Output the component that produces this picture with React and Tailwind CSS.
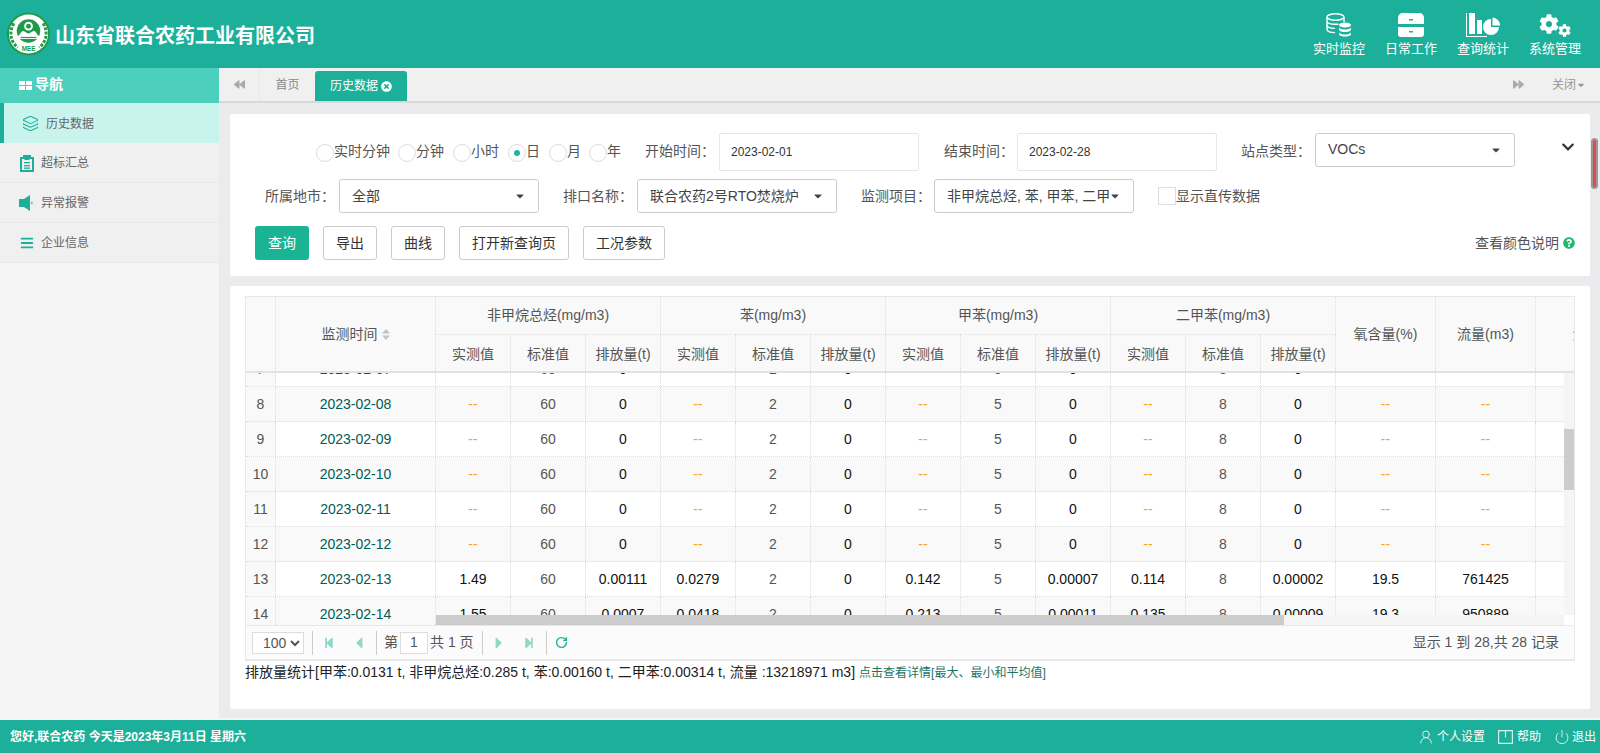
import { Layers, Power, RotateCw, UserRound } from 'lucide-react';
import {
  FaBackward,
  FaBars,
  FaCaretDown,
  FaCaretLeft,
  FaCaretRight,
  FaChevronDown,
  FaCog,
  FaForward,
  FaQuestionCircle,
  FaStepBackward,
  FaStepForward,
  FaTimesCircle,
} from 'react-icons/fa';

const TEAL = '#1cb09a';

const DB_ICON = (
  <svg width="26" height="24" viewBox="0 0 26 24" fill="none" stroke="white" strokeWidth="1.4">
    <ellipse cx="9.5" cy="4" rx="8.5" ry="3.2" />
    <path d="M1 4v12c0 2 3 3.6 8 3.6M18 4v5M1 8c0 2 3.5 3.3 8.5 3.3 1 0 2-.1 3-.2M1 12c0 2 3 3.4 8 3.4" />
    <ellipse cx="19" cy="12" rx="6" ry="2.4" fill="white" stroke="none" />
    <path d="M13 14.5c1 1.5 3 2 6 2s5-.5 6-2v2.5c-1 1.500-3 2-6 2s-5-.5-6-2zM13 19.500c1 1.500 3 2 6 2s5-.5 6-2v2c-1 1.500-3 2-6 2s-5-.5-6-2z" fill="white" stroke="none" />
  </svg>
);

const DRAWER_ICON = (
  <svg width="26" height="24" viewBox="0 0 26 24" fill="white">
    <path d="M5 0h16c3 0 5 2 5 5v6H0V5c0-3 2-5 5-5z" />
    <path d="M0 14h26v7c0 2-1 3-3 3H3c-2 0-3-1-3-3z" />
    <rect x="11" y="6" width="4" height="1.500" fill={TEAL} />
    <rect x="11" y="18" width="4" height="1.500" fill={TEAL} />
  </svg>
);

const CHART_ICON = (
  <svg width="34" height="24" viewBox="0 0 34 24" fill="white">
    <path d="M0 0h1v23h20v1H0z" />
    <rect x="3" y="0" width="6" height="21" />
    <rect x="11" y="7" width="5" height="14" />
    <path d="M25 6v8h8a8 8 0 1 1-8-8z" />
    <path d="M26.500 4.500a8 8 0 0 1 7.500 8h-7.500z" />
  </svg>
);

const GEARS_ICON = (
  <div className="flex items-end h-[24px]">
    <FaCog size={20} color="white" className="mb-[3px]" />
    <FaCog size={13} color="white" className="-ml-[1px]" />
  </div>
);

const TOP_NAV = [
  { label: '实时监控', icon: DB_ICON },
  { label: '日常工作', icon: DRAWER_ICON },
  { label: '查询统计', icon: CHART_ICON },
  { label: '系统管理', icon: GEARS_ICON },
];

const CELL = 'flex items-center justify-center border-r border-dotted border-[#ddd]';
const SUB_COL = `${CELL} w-[75px] shrink-0`;
const WIDE_COL = `${CELL} w-[100px] shrink-0`;

const ROWS = [
  ...[7, 8, 9, 10, 11, 12].map((n) => ({
    n,
    values: ['--', '60', '0', '--', '2', '0', '--', '5', '0', '--', '8', '0', '--', '--'],
  })),
  { n: 13, values: ['1.49', '60', '0.00111', '0.0279', '2', '0', '0.142', '5', '0.00007', '0.114', '8', '0.00002', '19.5', '761425'] },
  { n: 14, values: ['1.55', '60', '0.0007', '0.0418', '2', '0', '0.213', '5', '0.00011', '0.135', '8', '0.00009', '19.3', '950889'] },
];
const GROUPS = ['非甲烷总烃(mg/m3)', '苯(mg/m3)', '甲苯(mg/m3)', '二甲苯(mg/m3)'];
const pad = (n) => String(n).padStart(2, '0');

function Logo() {
  return (
    <svg width="43" height="44" viewBox="0 0 44 44" className="shrink-0">
      <circle cx="22" cy="22" r="22" fill="#1f9a48" />
      <circle cx="22" cy="22" r="20" fill="#fff" />
      <path d="M7 11c-5 9-4 18 4 25M37 11c5 9 4 18-4 25" fill="none" stroke="#1f9a48" strokeWidth="3" strokeDasharray="3 1.500" />
      <circle cx="22" cy="19" r="12" fill="#1f9a48" />
      <circle cx="22" cy="14" r="4.500" fill="#fff" />
      <circle cx="22" cy="14" r="2.500" fill="#1f9a48" />
      <path d="M11 24c3-1 3-5 5.500-5s3 2.500 5.500 2.500 3-2.500 5.500-2.500 2.500 4 5.500 5v3H11z" fill="#fff" />
      <path d="M14 25h16v1.200H14z" fill="#1f9a48" />
      <text x="22" y="39" textAnchor="middle" fontSize="6.500" fontWeight="700" fill="#1f9a48" fontFamily="Liberation Sans">MEE</text>
    </svg>
  );
}

function TopBar() {
  return (
    <header className="h-[68px] shrink-0 flex items-center bg-[#1cb09a] pl-[7px] pr-[9px]">
      <Logo />
      <h1 className="ml-[5px] mt-[3px] text-[20px] font-bold text-white">山东省联合农药工业有限公司</h1>
      <nav className="ml-auto flex">
        {TOP_NAV.map((item) => (
          <div key={item.label} className="w-[72px] h-[68px] flex flex-col items-center pt-[13px]">
            <div className="h-[24px] flex items-center justify-center">{item.icon}</div>
            <span className="mt-[2px] text-[13px] leading-[20px] text-white">{item.label}</span>
          </div>
        ))}
      </nav>
    </header>
  );
}

function ClipIcon() {
  return (
    <svg width="14" height="17" viewBox="0 0 14 17" fill="#1cb09a">
      <path d="M0 2h3V0h8v2h3v15H0zM2 4v11h10V4H9.500v1h-5V4z" fillRule="evenodd" />
      <rect x="4" y="7" width="6" height="1.300" />
      <rect x="4" y="10" width="6" height="1.300" />
      <rect x="4" y="12.500" width="6" height="1.300" />
    </svg>
  );
}

function SpeakerIcon() {
  return (
    <svg width="15" height="16" viewBox="0 0 15 16" fill="#1cb09a">
      <path d="M0 4h5l6-4v16l-6-4H0z" />
      <path d="M13 6.500c.8.800.8 2.200 0 3l-.8-.6c.4-.5.4-1.300 0-1.800z" />
    </svg>
  );
}

function Sidebar() {
  const items = [
    { label: '超标汇总', icon: <ClipIcon /> },
    { label: '异常报警', icon: <SpeakerIcon /> },
    { label: '企业信息', icon: <FaBars size={14} color="#1cb09a" /> },
  ];
  return (
    <aside className="w-[219px] shrink-0 bg-[#f5f5f5]">
      <div className="h-[35px] flex items-center pl-[19px] bg-[#4ccfbc] text-white text-[14px] font-bold">
        <svg width="13" height="9" viewBox="0 0 13 9" fill="white" className="mr-[3px]">
          <rect width="6" height="4" />
          <rect x="7" width="6" height="4" />
          <rect y="5" width="6" height="4" />
          <rect x="7" y="5" width="6" height="4" />
        </svg>
        <span className="-mt-[2px]">导航</span>
      </div>
      <div className="h-[40px] flex items-center border-l-4 border-[#1cb09a] bg-[#c9f4ed] pl-[18px] pt-px text-[12px] text-[#666]">
        <Layers size={17} color="#1cb09a" strokeWidth={1.5} />
        <span className="ml-[7px]">历史数据</span>
      </div>
      {items.map((item) => (
        <div key={item.label} className="h-[40px] flex items-center bg-[#f0f0f0] border-b border-[#e8e8e8] pl-[19px] pt-px text-[12px] text-[#666]">
          <div className="w-[15px] flex justify-center">{item.icon}</div>
          <span className="ml-[7px]">{item.label}</span>
        </div>
      ))}
    </aside>
  );
}

function TabBar() {
  return (
    <div className="h-[35px] shrink-0 flex bg-[#f0f0f0] border-b-2 border-[#d9d9d9] text-[12px]">
      <div className="w-[41px] flex items-center justify-center border-r border-[#e8e8e8]">
        <FaBackward size={11} color="#aaa" />
      </div>
      <div className="w-[55px] flex items-center justify-center text-[#888]">首页</div>
      <div className="mt-[3px] w-[92px] flex items-center pl-[15px] rounded-t-[3px] bg-[#1cb09a] text-white">
        历史数据
        <FaTimesCircle size={11} color="white" className="ml-[3px]" />
      </div>
      <div className="ml-auto flex items-center pr-[14px] text-[#999]">
        <FaForward size={11} color="#aaa" />
        <span className="ml-[28px]">关闭</span>
        <FaCaretDown size={10} color="#999" />
      </div>
    </div>
  );
}

function Radio({ label, checked, className }) {
  return (
    <label className={`flex items-center text-[14px] text-[#555] ${className ?? ''}`}>
      <span className="w-[18px] h-[18px] mt-[2px] shrink-0 flex items-center justify-center rounded-full border border-[#ddd] bg-white">
        {checked && <span className="w-[6px] h-[6px] rounded-full bg-[#1ab5a8]" />}
      </span>
      {label}
    </label>
  );
}

function DateInput({ value, className }) {
  return (
    <div className={`w-[200px] h-[38px] shrink-0 flex items-center pl-[11px] border border-[#e6e6e6] rounded-[2px] text-[12px] text-[#333] ${className ?? ''}`}>
      {value}
    </div>
  );
}

function FormSelect({ children, className }) {
  return (
    <div className={`w-[200px] h-[34px] shrink-0 flex items-center pl-[12px] pr-[12px] border border-[#ccc] rounded-[3px] text-[14px] text-[#444] ${className ?? ''}`}>
      <span className="flex-1 whitespace-nowrap overflow-hidden">{children}</span>
      <FaCaretDown size={12} color="#444" className="shrink-0" />
    </div>
  );
}

function Btn({ children, primary, className }) {
  return (
    <button
      className={`h-[34px] rounded-[3px] text-[14px] ${
        primary ? 'bg-[#1ab394] text-white' : 'border border-[#ccc] bg-white text-[#333]'
      } ${className}`}
    >
      {children}
    </button>
  );
}

function QueryForm() {
  const label = 'text-[14px] text-[#555] whitespace-nowrap';
  return (
    <section className="bg-white rounded-[2px] pl-[25px] pr-[15px] pt-[18px] pb-[16px]">
      <div className="h-[39px] flex items-center pl-[61px]">
        <Radio label="实时分钟" />
        <Radio label="分钟" className="ml-[8px]" />
        <Radio label="小时" className="ml-[9px]" />
        <Radio label="日" checked className="ml-[9px]" />
        <Radio label="月" className="ml-[9px]" />
        <Radio label="年" className="ml-[8px]" />
        <span className={`${label} ml-[24px]`}>开始时间：</span>
        <DateInput value="2023-02-01" className="ml-[4px]" />
        <span className={`${label} ml-[25px]`}>结束时间：</span>
        <DateInput value="2023-02-28" className="ml-[3px]" />
        <span className={`${label} ml-[24px]`}>站点类型：</span>
        <FormSelect className="ml-[4px] -mt-[4px]">VOCs</FormSelect>
        <FaChevronDown size={14} color="#333" className="ml-[46px] -mt-[10px]" />
      </div>
      <div className="mt-[8px] h-[34px] flex items-center pl-[10px]">
        <span className={label}>所属地市：</span>
        <FormSelect className="ml-[4px]">全部</FormSelect>
        <span className={`${label} ml-[24px]`}>排口名称：</span>
        <FormSelect className="ml-[4px]">联合农药2号RTO焚烧炉</FormSelect>
        <span className={`${label} ml-[24px]`}>监测项目：</span>
        <FormSelect className="ml-[3px]">非甲烷总烃, 苯, 甲苯, 二甲苯</FormSelect>
        <label className="ml-[24px] flex items-center text-[14px] text-[#555]">
          <span className="w-[18px] h-[18px] border border-[#ddd] bg-white" />
          显示直传数据
        </label>
      </div>
      <div className="mt-[13px] flex items-center">
        <Btn primary className="w-[54px]">查询</Btn>
        <Btn className="w-[54px] ml-[14px]">导出</Btn>
        <Btn className="w-[54px] ml-[14px]">曲线</Btn>
        <Btn className="w-[110px] ml-[14px]">打开新查询页</Btn>
        <Btn className="w-[82px] ml-[14px]">工况参数</Btn>
        <span className="ml-auto text-[14px] text-[#555]">查看颜色说明</span>
        <FaQuestionCircle size={12} color="#1fb86e" className="ml-[4px]" />
      </div>
    </section>
  );
}

function TableHeader() {
  return (
    <div className="h-[76px] flex overflow-hidden bg-[#f9f9f9] border-b-2 border-[#e2e2e2] text-[14px] text-[#555]">
      <div className={`${CELL} w-[30px] shrink-0`} />
      <div className={`${CELL} w-[160px] shrink-0`}>
        监测时间
        <svg width="8" height="11" viewBox="0 0 8 11" fill="#c4c4c4" className="ml-[4px]">
          <path d="M4 0l4 4.500H0zM4 11L0 6.500h8z" />
        </svg>
      </div>
      {GROUPS.map((g) => (
        <div key={g} className="w-[225px] shrink-0 flex flex-col">
          <div className={`${CELL} h-[38px] shrink-0 border-b`}>{g}</div>
          <div className="flex-1 flex">
            <div className={`${SUB_COL} pt-[2px]`}>实测值</div>
            <div className={`${SUB_COL} pt-[2px]`}>标准值</div>
            <div className={`${SUB_COL} pt-[2px]`}>排放量(t)</div>
          </div>
        </div>
      ))}
      <div className={WIDE_COL}>氧含量(%)</div>
      <div className={WIDE_COL}>流量(m3)</div>
      <div className={`${CELL} w-[134px] shrink-0`}>流速(m/s)</div>
    </div>
  );
}

function valueClass(i, v) {
  if (v === '--') return 'text-[#f5a623]';
  // 标准值 columns are the grey ones
  if (i === 1 || i === 4 || i === 7 || i === 10) return 'text-[#555]';
  return 'text-[#111]';
}

function TableRow({ row }) {
  const bg = row.n % 2 === 0 ? 'bg-[#f9f9f9]' : 'bg-white';
  return (
    <div className={`h-[35px] flex border-b border-dotted border-[#ddd] text-[14px] ${bg}`}>
      <div className={`${CELL} w-[30px] shrink-0 bg-[#f9f9f9] text-[#555]`}>{row.n}</div>
      <div className={`${CELL} w-[160px] shrink-0 text-[#005c55]`}>2023-02-{pad(row.n)}</div>
      {row.values.map((v, i) => (
        <div key={i} className={`${i < 12 ? SUB_COL : WIDE_COL} ${valueClass(i, v)}`}>{v}</div>
      ))}
      <div className={`${CELL} w-[134px] shrink-0`} />
    </div>
  );
}

function Sep({ className }) {
  return <span className={`w-[1px] h-[24px] shrink-0 bg-[#ccc] ${className ?? ''}`} />;
}

function PageBtn({ children }) {
  return <div className="w-[30px] shrink-0 flex items-center justify-center">{children}</div>;
}

function Pagination() {
  return (
    <div className="h-[36px] flex items-center border-t border-b-2 border-[#e8e8e8] bg-[#fbfbfb] text-[14px] text-[#555] rounded-tr-[3px]">
      <select defaultValue="100" className="ml-[6px] w-[52px] h-[22px] pl-[6px] border border-[#ddd] bg-white text-[14px] text-[#555]">
        <option value="100">100</option>
      </select>
      <Sep className="ml-[8px]" />
      <div className="ml-[1px] flex">
        <PageBtn><FaStepBackward size={12} color="#8fd8c8" /></PageBtn>
        <PageBtn><FaCaretLeft size={18} color="#8fd8c8" /></PageBtn>
      </div>
      <Sep className="ml-[2px]" />
      <span className="ml-[7px]">第</span>
      <span className="ml-[2px] w-[28px] h-[22px] flex items-center justify-center border border-[#ddd] bg-white">1</span>
      <span className="ml-[2px] whitespace-pre">共 1 页</span>
      <Sep className="ml-[8px]" />
      <div className="ml-[1px] flex">
        <PageBtn><FaCaretRight size={18} color="#8fd8c8" /></PageBtn>
        <PageBtn><FaStepForward size={12} color="#8fd8c8" /></PageBtn>
      </div>
      <Sep className="ml-[2px]" />
      <PageBtn><RotateCw size={13} color="#1cb09a" strokeWidth={2.5} /></PageBtn>
      <span className="ml-auto mr-[15px]">显示 1 到 28,共 28 记录</span>
    </div>
  );
}

function DataPanel() {
  return (
    <section className="flex-1 min-h-0 bg-white rounded-[2px] pl-[15px] pr-[15px] pt-[10px]">
      <div className="border-x border-t border-[#e8e8e8] overflow-hidden">
        <TableHeader />
        <div className="relative h-[252px] overflow-hidden">
          <div className="-mt-[21px]">
            {ROWS.map((row) => <TableRow key={row.n} row={row} />)}
          </div>
          <div className="absolute top-0 right-0 w-[10px] h-[242px] bg-[#f5f5f5]">
            <div className="mt-[56px] h-[61px] bg-[#cccccc]" />
          </div>
          <div className="absolute bottom-0 left-[190px] right-[10px] h-[10px] bg-[#f5f5f5]">
            <div className="w-[848px] h-full bg-[#cccccc]" />
          </div>
          <div className="absolute bottom-0 right-0 w-[10px] h-[10px] bg-white" />
        </div>
        <Pagination />
      </div>
      <p className="mt-px leading-[20px] text-[14px] text-[#222]">
        排放量统计[甲苯:0.0131 t, 非甲烷总烃:0.285 t, 苯:0.00160 t, 二甲苯:0.00314 t, 流量 :13218971 m3]
        <a className="ml-[4px] text-[12px] text-[#1a7568]">点击查看详情[最大、最小和平均值]</a>
      </p>
    </section>
  );
}

function Footer() {
  return (
    <footer className="h-[33px] shrink-0 flex items-center bg-[#1cb09a] pl-[10px] pr-[4px] text-[12px] text-white">
      <span className="font-bold">您好,联合农药 今天是2023年3月11日 星期六</span>
      <div className="ml-auto flex items-center">
        <UserRound size={16} strokeWidth={1.5} color="#d5f1ec" />
        <span className="ml-[3px]">个人设置</span>
        <svg width="15" height="14" viewBox="0 0 15 14" fill="none" stroke="#d5f1ec" strokeWidth="1.200" className="ml-[13px]">
          <path d="M.6.600h13.800v12.800H.6zM7.500.600v7" />
        </svg>
        <span className="ml-[4px]">帮助</span>
        <Power size={16} strokeWidth={1.5} color="#d5f1ec" className="ml-[13px]" />
        <span className="ml-[2px]">退出</span>
      </div>
    </footer>
  );
}

export default function App() {
  return (
    <div className="h-[753px] flex flex-col overflow-hidden bg-[#ebebed] [font-family:'Liberation_Sans','Noto_Sans_CJK_SC',sans-serif]">
      <TopBar />
      <div className="flex-1 min-h-0 flex">
        <Sidebar />
        <main className="relative flex-1 min-w-0 flex flex-col">
          <TabBar />
          <div className="flex-1 min-h-0 flex flex-col gap-[10px] pt-[11px] pl-[11px] pr-[10px] pb-[9px]">
            <QueryForm />
            <DataPanel />
          </div>
          <div className="absolute top-[70px] right-[2px] w-[7px] h-[51px] rounded-[4px] bg-[#e04b4b] border-2 border-[#999]" />
        </main>
      </div>
      <div className="h-[2px] shrink-0 bg-[#f5f5f5]" />
      <Footer />
    </div>
  );
}
